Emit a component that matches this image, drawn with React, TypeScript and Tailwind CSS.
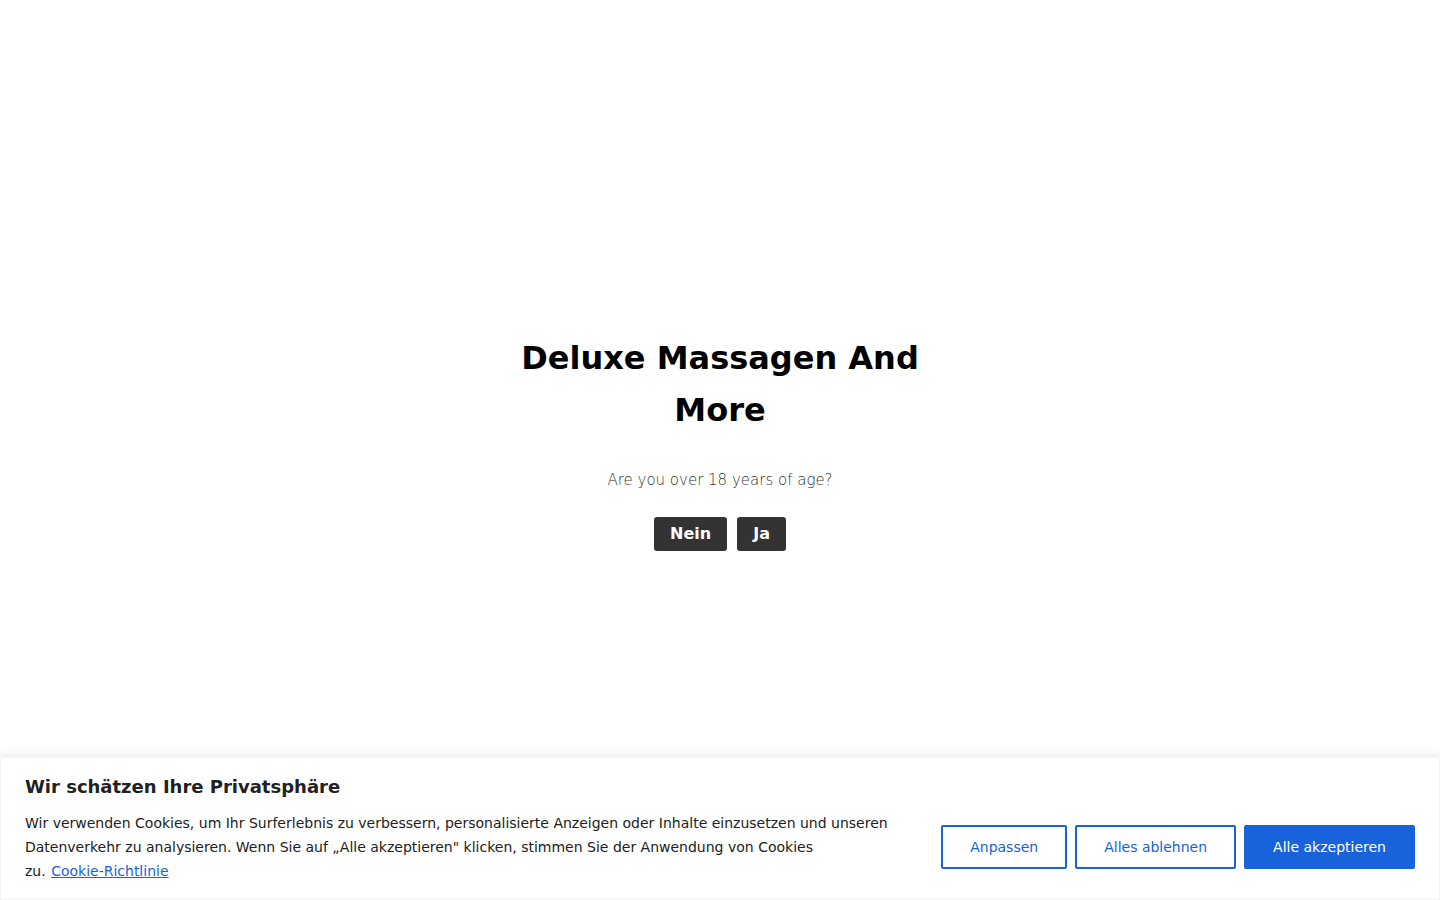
import React from "react";

export default function App() {
  return (
    <div className="relative h-[900px] w-full overflow-hidden bg-white" style={{ fontFamily: '"DejaVu Sans", sans-serif' }}>
      <div className="flex h-[900px] flex-col items-center justify-center pb-[17px]">
        <h1 className="w-[440px] text-center text-[32px] font-bold leading-[52px] text-black">
          Deluxe Massagen And More
        </h1>
        <p className="mt-[32px] text-[15px] font-light leading-[24px] text-[#333]">
          Are you over 18 years of age?
        </p>
        <div className="mt-[25px] flex gap-[10px]">
          <button className="h-[34px] rounded-[3px] bg-[#333] px-[16px] text-[16px] font-bold text-white">Nein</button>
          <button className="h-[34px] rounded-[3px] bg-[#333] px-[16px] text-[16px] font-bold text-white">Ja</button>
        </div>
      </div>

      <div className="absolute bottom-0 left-0 right-0 h-[143px] border border-[#f4f4f4] bg-white px-[24px] pt-[15px] shadow-[0_-1px_10px_0_rgba(172,171,171,0.3)]">
        <h2 className="text-[18px] font-bold leading-[28px] text-[#212121]">Wir schätzen Ihre Privatsphäre</h2>
        <div className="mt-[10px] flex items-center justify-between">
          <p className="w-[880px] text-[14px] leading-[24px] text-[#212121]">
            Wir verwenden Cookies, um Ihr Surferlebnis zu verbessern, personalisierte Anzeigen oder Inhalte einzusetzen und unseren Datenverkehr zu analysieren. Wenn Sie auf „Alle akzeptieren" klicken, stimmen Sie der Anwendung von Cookies{" "}
            <span className="whitespace-nowrap">
              zu.{"\u00a0"}<a className="ml-[1px] text-[#1863dc] underline">Cookie-Richtlinie</a>
            </span>
          </p>
          <div className="flex gap-[8px]">
            <button className="h-[44px] rounded-[2px] border-2 border-[#1863dc] bg-white px-[27px] text-[14px] text-[#1863dc]">Anpassen</button>
            <button className="h-[44px] rounded-[2px] border-2 border-[#1863dc] bg-white px-[27px] text-[14px] text-[#1863dc]">Alles ablehnen</button>
            <button className="h-[44px] rounded-[2px] border-2 border-[#1863dc] bg-[#1863dc] px-[27px] text-[14px] text-white">Alle akzeptieren</button>
          </div>
        </div>
      </div>
    </div>
  );
}
